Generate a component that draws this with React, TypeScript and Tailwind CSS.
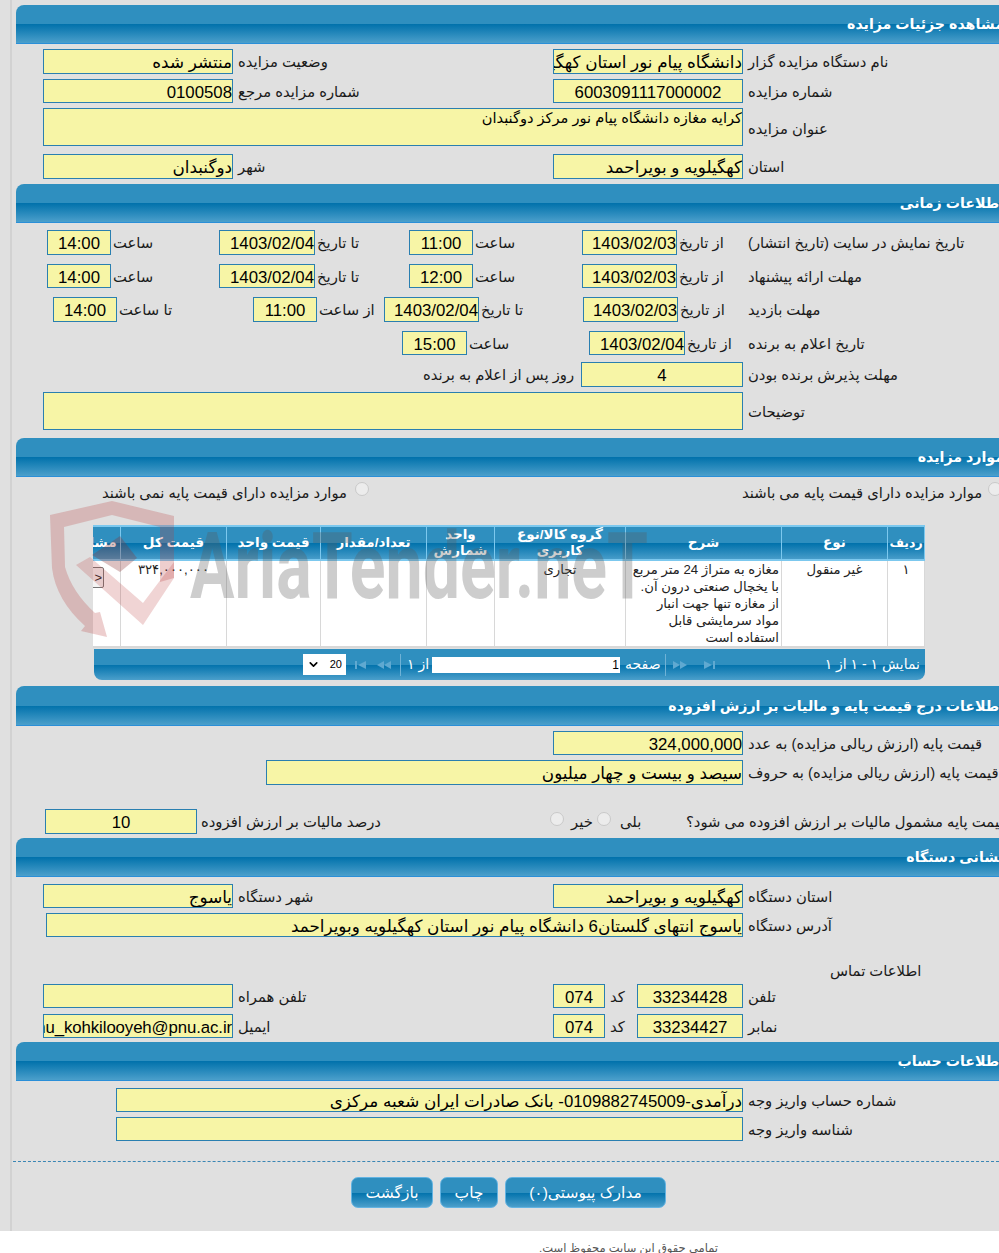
import React from 'react';
import { ChevronDown } from 'lucide-react';

const barBg = 'bg-[linear-gradient(#2f8fbf_0%,#2f8fbf_50%,#0071ab_50%,#4b9fcb_100%)]';

const SectionHead: React.FC<{ title: string; className?: string }> = ({ title, className = '' }) => (
  <div dir="rtl" className={`flex items-center rounded-tl-lg border-b border-[#2a8fd8] pt-[2px] text-[14.2px] font-bold text-white whitespace-nowrap ${barBg} ${className}`}>
    {title}
  </div>
);

const Box: React.FC<{ className: string; children?: React.ReactNode; center?: boolean; small?: boolean }> = ({ className, children, center, small }) => (
  <div
    dir="rtl"
    className={`shrink-0 overflow-hidden whitespace-nowrap border border-[#2a7fb0] bg-[#f7f5a6] text-black ${small ? 'text-[14.6px] leading-[19px]' : 'text-[16.8px] leading-[25px]'} ${center ? 'text-center' : 'text-right'} ${className}`}
  >
    {children}
  </div>
);

const Label: React.FC<{ className: string; children?: React.ReactNode }> = ({ className, children }) => (
  <div dir="rtl" className={`shrink-0 whitespace-nowrap pt-[2px] text-left text-[14.8px] text-[#1a1a1a] ${className}`}>
    {children}
  </div>
);

const Row: React.FC<{ className: string; children: React.ReactNode }> = ({ className, children }) => (
  <div className={`flex items-center ${className}`}>{children}</div>
);

const FirstIcon = () => (
  <svg width="14" height="10" viewBox="0 0 14 10" fill="#5fa9d1"><rect x="1" y="1" width="2" height="8" /><polygon points="12,1 12,9 4,5" /></svg>
);
const LastIcon = () => (
  <svg width="14" height="10" viewBox="0 0 14 10" fill="#5fa9d1"><rect x="11" y="1" width="2" height="8" /><polygon points="2,1 2,9 10,5" /></svg>
);
const PrevIcon = () => (
  <svg width="16" height="10" viewBox="0 0 16 10" fill="#5fa9d1"><polygon points="8,1 8,9 1,5" /><polygon points="15,1 15,9 8,5" /></svg>
);
const NextIcon = () => (
  <svg width="16" height="10" viewBox="0 0 16 10" fill="#5fa9d1"><polygon points="1,1 1,9 8,5" /><polygon points="8,1 8,9 15,5" /></svg>
);

const Radio: React.FC<{ className?: string }> = ({ className = '' }) => (
  <span className={`block h-[14px] w-[14px] shrink-0 rounded-full border border-[#c9c9c9] bg-[#ececec] ${className}`} />
);

const columns = [
  { title: 'ردیف', w: 'w-[37px]' },
  { title: 'نوع', w: 'w-[106px]' },
  { title: 'شرح', w: 'w-[156px]' },
  { title: 'گروه کالا/نوع کاربری', w: 'w-[131px]' },
  { title: 'واحد شمارش', w: 'w-[68px]' },
  { title: 'تعداد/مقدار', w: 'w-[106px]' },
  { title: 'قیمت واحد', w: 'w-[94px]' },
  { title: 'قیمت کل', w: 'w-[106px]' },
  { title: 'مشاهده', w: 'w-[60px]' },
];

const App: React.FC = () => {
  return (
    <div className="relative h-[1253px] w-[999px] overflow-hidden bg-white font-['Liberation_Sans','DejaVu_Sans',sans-serif]">
      <div className="h-[1231px] bg-[#e0e0e0] pl-[10px]">
        <div className="h-full w-[994px] border-l-2 border-[#d2d2d2] pl-[4px] pt-[5px]">
          {/* جزئیات مزایده */}
          <SectionHead title="مشاهده جزئیات مزایده" className="h-[39px]" />
          <Row className="mt-[5px] h-[25px] pl-[27px]">
            <Box className="h-[25px] w-[190px]">منتشر شده</Box>
            <Label className="w-[320px] pl-[5px]">وضعیت مزایده</Label>
            <Box className="h-[25px] w-[190px]">دانشگاه پیام نور استان کهگیلویه و بویراحمد</Box>
            <Label className="w-[200px] pl-[5px]">نام دستگاه مزایده گزار</Label>
          </Row>
          <Row className="mt-[5px] h-[24px] pl-[27px]">
            <Box className="h-[24px] w-[190px]">0100508</Box>
            <Label className="w-[320px] pl-[5px]">شماره مزایده مرجع</Label>
            <Box center className="h-[24px] w-[190px]">6003091117000002</Box>
            <Label className="w-[200px] pl-[5px]">شماره مزایده</Label>
          </Row>
          <Row className="mt-[5px] h-[38px] pl-[27px]">
            <Box small className="h-[38px] w-[700px]">کرایه مغازه دانشگاه پیام نور مرکز دوگنبدان</Box>
            <Label className="mt-[3px] w-[200px] pl-[5px]">عنوان مزایده</Label>
          </Row>
          <Row className="mt-[8px] h-[25px] pl-[27px]">
            <Box className="h-[25px] w-[190px]">دوگنبدان</Box>
            <Label className="w-[320px] pl-[5px]">شهر</Label>
            <Box className="h-[25px] w-[190px]">کهگیلویه و بویراحمد</Box>
            <Label className="w-[200px] pl-[5px]">استان</Label>
          </Row>

          {/* اطلاعات زمانی */}
          <SectionHead title="اطلاعات زمانی" className="mt-[5px] h-[39px]" />
          <Row className="mt-[7px] h-[25px] pl-[31px]">
            <Box center className="h-[25px] w-[64px]">14:00</Box>
            <Label className="w-[108px] pl-[2px]">ساعت</Label>
            <Box className="h-[25px] w-[96px]">1403/02/04</Box>
            <Label className="w-[94px] pl-[2px]">تا تاریخ</Label>
            <Box center className="h-[25px] w-[64px]">11:00</Box>
            <Label className="w-[109px] pl-[2px]">ساعت</Label>
            <Box className="h-[25px] w-[95px]">1403/02/03</Box>
            <Label className="w-[71px] pl-[2px]">از تاریخ</Label>
            <Label className="w-[250px]">تاریخ نمایش در سایت (تاریخ انتشار)</Label>
          </Row>
          <Row className="mt-[9px] h-[24px] pl-[31px]">
            <Box center className="h-[24px] w-[64px]">14:00</Box>
            <Label className="w-[108px] pl-[2px]">ساعت</Label>
            <Box className="h-[24px] w-[96px]">1403/02/04</Box>
            <Label className="w-[94px] pl-[2px]">تا تاریخ</Label>
            <Box center className="h-[24px] w-[64px]">12:00</Box>
            <Label className="w-[109px] pl-[2px]">ساعت</Label>
            <Box className="h-[24px] w-[95px]">1403/02/03</Box>
            <Label className="w-[71px] pl-[2px]">از تاریخ</Label>
            <Label className="w-[250px]">مهلت ارائه پیشنهاد</Label>
          </Row>
          <Row className="mt-[9px] h-[25px] pl-[37px]">
            <Box center className="h-[25px] w-[64px]">14:00</Box>
            <Label className="w-[136px] pl-[2px]">تا ساعت</Label>
            <Box center className="h-[25px] w-[64px]">11:00</Box>
            <Label className="w-[67px] pl-[2px]">از ساعت</Label>
            <Box className="h-[25px] w-[95px]">1403/02/04</Box>
            <Label className="w-[104px] pl-[2px]">تا تاریخ</Label>
            <Box className="h-[25px] w-[95px]">1403/02/03</Box>
            <Label className="w-[70px] pl-[2px]">از تاریخ</Label>
            <Label className="w-[250px]">مهلت بازدید</Label>
          </Row>
          <Row className="mt-[9px] h-[24px] pl-[386px]">
            <Box center className="h-[24px] w-[65px]">15:00</Box>
            <Label className="w-[122px] pl-[2px]">ساعت</Label>
            <Box className="h-[24px] w-[96px]">1403/02/04</Box>
            <Label className="w-[63px] pl-[2px]">از تاریخ</Label>
            <Label className="w-[250px]">تاریخ اعلام به برنده</Label>
          </Row>
          <Row className="mt-[7px] h-[25px] pl-[407px]">
            <Label className="w-[158px]">روز پس از اعلام به برنده</Label>
            <Box center className="h-[25px] w-[162px]">4</Box>
            <Label className="w-[200px] pl-[5px]">مهلت پذیرش برنده بودن</Label>
          </Row>
          <Row className="mt-[5px] h-[38px] pl-[27px]">
            <Box className="h-[38px] w-[700px]" />
            <Label className="mt-[1px] w-[200px] pl-[5px]">توضیحات</Label>
          </Row>

          {/* موارد مزایده */}
          <SectionHead title="موارد مزایده" className="mt-[8px] h-[39px]" />
          <Row className="mt-[5px] h-[20px] pl-[86px]">
            <Label className="w-[253px]">موارد مزایده دارای قیمت پایه نمی باشند</Label>
            <Radio className="-mt-[6px]" />
            <Label className="ml-[373px] w-[246px]">موارد مزایده دارای قیمت پایه می باشند</Label>
            <Radio className="-mt-[6px]" />
          </Row>

          <div dir="rtl" className="ml-[77px] mt-[23px] w-[832px] overflow-hidden">
            <table className="w-[864px] table-fixed border-collapse">
              <thead>
                <tr className={barBg}>
                  {columns.map(col => (
                    <th key={col.title} className={`${col.w} h-[33px] border-x border-y-2 border-[#7cc8ee] px-0 text-[13.5px] font-bold leading-[16px] text-white`}>
                      {col.title === 'ردیف' ? <span className="text-[12.5px]">{col.title}</span> : col.title}
                    </th>
                  ))}
                </tr>
              </thead>
              <tbody>
                <tr className="bg-white align-top text-[13.2px] leading-[17px] text-[#222]">
                  <td className="h-[85px] border-x border-b-2 border-[#d8d8d8] text-center">۱</td>
                  <td className="border-x border-b-2 border-[#d8d8d8] text-center">غیر منقول</td>
                  <td className="whitespace-nowrap border-x border-b-2 border-[#d8d8d8] pr-[2px] text-right">
                    مغازه به متراژ 24 متر مربع<br />
                    با یخچال صنعتی درون آن.<br />
                    از مغازه تنها جهت انبار<br />
                    مواد سرمایشی قابل<br />
                    استفاده است
                  </td>
                  <td className="border-x border-b-2 border-[#d8d8d8] text-center">تجاری</td>
                  <td className="border-x border-b-2 border-[#d8d8d8]" />
                  <td className="border-x border-b-2 border-[#d8d8d8]" />
                  <td className="border-x border-b-2 border-[#d8d8d8]" />
                  <td className="border-x border-b-2 border-[#d8d8d8] text-center">۳۲۴,۰۰۰,۰۰۰</td>
                  <td className="border-x border-b-2 border-[#d8d8d8] pr-[16px] pt-[6px]">
                    <div dir="ltr" className="h-[21px] w-[40px] rounded-[2px] border border-[#777] bg-[#f4f4f4] pr-[1px] text-right text-[13px] leading-[19px]">&gt;</div>
                  </td>
                </tr>
              </tbody>
            </table>
          </div>

          {/* صفحه بندی */}
          <div className={`ml-[78px] mt-[1px] flex h-[31px] w-[831px] items-center rounded-b-lg pl-[209px] text-[14px] text-white ${barBg}`}>
            <div className="flex h-[21px] w-[43px] shrink-0 items-center justify-between bg-white px-[4px] text-[11px] text-black">
              <ChevronDown size={13} strokeWidth={3} />
              <span>20</span>
            </div>
            <div className="ml-[8px] flex w-[38px] shrink-0 items-center justify-between">
              <FirstIcon />
              <PrevIcon />
            </div>
            <div className="ml-[8px] h-[22px] w-px shrink-0 bg-[#6fb2d6]" />
            <div dir="rtl" className="w-[31px] shrink-0 whitespace-nowrap pl-[6px] text-left">از ۱</div>
            <div dir="ltr" className="h-[16px] w-[188px] shrink-0 bg-white pr-[1px] text-right text-[12px] leading-[16px] text-black">1</div>
            <div dir="rtl" className="w-[45px] shrink-0 whitespace-nowrap pl-[5px] text-left">صفحه</div>
            <div className="h-[22px] w-px shrink-0 bg-[#6fb2d6]" />
            <div className="ml-[6px] flex w-[44px] shrink-0 items-center justify-between">
              <NextIcon />
              <LastIcon />
            </div>
            <div dir="rtl" className="flex-1 whitespace-nowrap pr-[5px] text-right">نمایش ۱ - ۱ از ۱</div>
          </div>

          {/* قیمت پایه */}
          <SectionHead title="اطلاعات درج قیمت پایه و مالیات بر ارزش افزوده" className="mt-[6px] h-[40px]" />
          <Row className="mt-[5px] h-[24px] pl-[537px]">
            <Box className="h-[24px] w-[190px]">324,000,000</Box>
            <Label className="w-[260px] pl-[5px]">قیمت پایه (ارزش ریالی مزایده) به عدد</Label>
          </Row>
          <Row className="mt-[5px] h-[25px] pl-[250px]">
            <Box className="h-[25px] w-[477px]">سیصد و بیست و چهار میلیون</Box>
            <Label className="w-[270px] pl-[5px]">قیمت پایه (ارزش ریالی مزایده) به حروف</Label>
          </Row>
          <Row className="mt-[24px] h-[25px] pl-[29px]">
            <Box center className="h-[25px] w-[152px]">10</Box>
            <Label className="w-[353px] pl-[4px]">درصد مالیات بر ارزش افزوده</Label>
            <Radio className="-mt-[5px]" />
            <Label className="w-[33px] pl-[7px]">خیر</Label>
            <Radio className="-mt-[5px]" />
            <Label className="w-[75px] pl-[9px]">بلی</Label>
            <Label className="w-[350px]">قیمت پایه مشمول مالیات بر ارزش افزوده می شود؟</Label>
          </Row>

          {/* نشانی دستگاه */}
          <SectionHead title="نشانی دستگاه" className="mt-[4px] h-[39px]" />
          <Row className="mt-[7px] h-[24px] pl-[27px]">
            <Box className="h-[24px] w-[190px]">یاسوج</Box>
            <Label className="w-[320px] pl-[5px]">شهر دستگاه</Label>
            <Box className="h-[24px] w-[190px]">کهگیلویه و بویراحمد</Box>
            <Label className="w-[200px] pl-[5px]">استان دستگاه</Label>
          </Row>
          <Row className="mt-[5px] h-[24px] pl-[30px]">
            <Box className="h-[24px] w-[697px]">یاسوج انتهای گلستان6 دانشگاه پیام نور استان کهگیلویه وبویراحمد</Box>
            <Label className="w-[200px] pl-[5px]">آدرس دستگاه</Label>
          </Row>
          <Row className="mt-[23px] h-[20px] pl-[814px]">
            <Label className="w-[100px]">اطلاعات تماس</Label>
          </Row>
          <Row className="mt-[4px] h-[24px] pl-[27px]">
            <Box className="h-[24px] w-[190px]" />
            <Label className="w-[320px] pl-[5px]">تلفن همراه</Label>
            <Box center className="h-[24px] w-[52px]">074</Box>
            <Label className="w-[32px] pl-[5px]">کد</Label>
            <Box center className="h-[24px] w-[106px]">33234428</Box>
            <Label className="w-[100px] pl-[5px]">تلفن</Label>
          </Row>
          <Row className="mt-[6px] h-[24px] pl-[27px]">
            <Box className="h-[24px] w-[190px] tracking-[-0.1px]">pnu_kohkilooyeh@pnu.ac.ir</Box>
            <Label className="w-[320px] pl-[5px]">ایمیل</Label>
            <Box center className="h-[24px] w-[52px]">074</Box>
            <Label className="w-[32px] pl-[5px]">کد</Label>
            <Box center className="h-[24px] w-[106px]">33234427</Box>
            <Label className="w-[100px] pl-[5px]">نمابر</Label>
          </Row>

          {/* حساب */}
          <SectionHead title="اطلاعات حساب" className="mt-[4px] h-[39px]" />
          <Row className="mt-[7px] h-[24px] pl-[100px]">
            <Box className="h-[24px] w-[627px] tracking-[-0.2px]">درآمدی-0109882745009- بانک صادرات ایران شعبه مرکزی</Box>
            <Label className="w-[200px] pl-[5px]">شماره حساب واریز وجه</Label>
          </Row>
          <Row className="mt-[5px] h-[24px] pl-[100px]">
            <Box className="h-[24px] w-[627px]" />
            <Label className="w-[200px] pl-[5px]">شناسه واریز وجه</Label>
          </Row>

          <div className="-ml-[3px] mt-[20px] border-t border-dashed border-[#3a86b4]" />

          <div dir="ltr" className="mt-[15px] flex h-[31px] gap-[7px] pl-[335px] text-[15.5px] text-white">
            <button className={`w-[82px] rounded-[7px] border border-[#63b3e2] ${barBg}`}>بازگشت</button>
            <button className={`w-[58px] rounded-[7px] border border-[#63b3e2] ${barBg}`}>چاپ</button>
            <button className={`w-[161px] rounded-[7px] border border-[#63b3e2] ${barBg}`}>مدارک پیوستی(۰)</button>
          </div>
        </div>
      </div>

      <div dir="rtl" className="ml-[540px] mt-[9px] w-[178px] whitespace-nowrap text-left text-[11.5px] text-[#555]">تمامی حقوق این سایت محفوظ است.</div>

      {/* واترمارک */}
      <svg className="pointer-events-none absolute left-[40px] top-[495px]" width="150" height="150" viewBox="40 495 150 150">
        <path
          d="M50 515 L112 501 L174 516 L174 578 L160 582 L160 527 L112 515 L64 527 L65 567 Q72 592 95 613 L100 612 L107 637 L81 631 L85 626 Q56 600 52 568 Z"
          fill="#b93c3c"
          fillOpacity="0.25"
        />
        <path d="M76 565 L90 557 L143 603 L174 562 L174 578 L143 625 Z" fill="#b93c3c" fillOpacity="0.22" />
        <path d="M92 555 L120 536 L137 558 L120 572 Z" fill="#8c3232" fillOpacity="0.3" />
      </svg>
      <div className="pointer-events-none absolute left-[190px] top-[515px] origin-left scale-x-[0.72] whitespace-nowrap font-['Roboto',sans-serif] text-[92px] font-bold leading-[104px] text-[#5a5a5a]/30">
        AriaTender.neT
      </div>
    </div>
  );
};

export default App;
